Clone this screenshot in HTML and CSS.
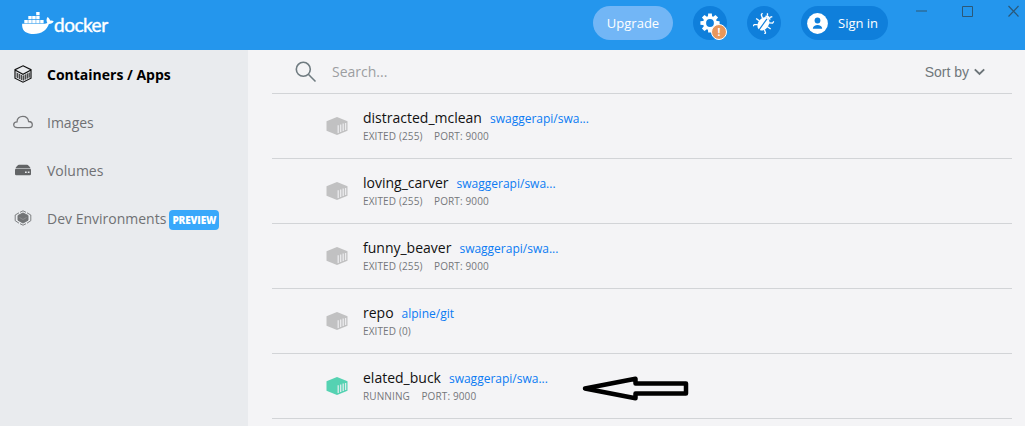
FILE: index.html
```html
<!DOCTYPE html>
<html lang="en">
<head>
<meta charset="utf-8">
<title>Docker Desktop</title>
<link rel="stylesheet" href="styles.css">
</head>
<body>
<svg class="defs" width="0" height="0" aria-hidden="true">
  <symbol id="box" viewBox="0 0 22 18">
    <path d="M11 0 21.500 4.200V13.800L11 18 .5 13.800V4.200Z" fill="currentColor"/>
    <path d="M12.200 8.200V16M14.700 7.400V15M17.200 6.600V14M19.600 6V13" stroke="#f4f4f6" stroke-width="1.300" opacity=".85"/>
  </symbol>
</svg>
<header class="topbar">
  <div class="logo">
    <svg width="32" height="23" viewBox="0 0 32 23" fill="#fff">
      <path d="M14.200 0h3.400v3.300h-3.400zM6.300 4h3.400v3.300H6.300zM10.200 4h3.500v3.300h-3.500zM14.200 4h3.400v3.300h-3.400zM2.300 8h3.500v3.200H2.300zM6.300 8h3.400v3.200H6.300zM10.200 8h3.500v3.200h-3.500zM14.200 8h3.400v3.200h-3.400zM18.200 8h3.400v3.200h-3.400z"/>
      <path d="M.2 11.800H22C23.300 11.800 24.600 11.500 25.300 10.800 24.200 9 24.300 6.700 25.500 5 27.100 6 27.800 7.200 28 8.600 29.500 8.300 30.700 8.600 31.700 9.300 30.900 11 29.400 12 26.900 12 24.500 18.300 19.800 22 11.700 22 4.500 22-.6 18.800.2 11.800Z"/>
    </svg>
    <span class="wordmark">docker</span>
  </div>
  <div class="actions">
    <button class="upgrade">Upgrade</button>
    <button class="round gear">
      <svg width="20" height="20" viewBox="-10 -10 20 20">
        <g fill="#fff"><path id="tooth" d="M-1.800-9.600H1.800L2.300-5H-2.300Z"/><use href="#tooth" transform="rotate(45)"/><use href="#tooth" transform="rotate(90)"/><use href="#tooth" transform="rotate(135)"/><use href="#tooth" transform="rotate(180)"/><use href="#tooth" transform="rotate(225)"/><use href="#tooth" transform="rotate(270)"/><use href="#tooth" transform="rotate(315)"/></g>
        <circle r="5.400" fill="none" stroke="#fff" stroke-width="3"/>
      </svg>
      <span class="alert">!</span>
    </button>
    <button class="round">
      <svg width="22" height="22" viewBox="-11 -11 22 22">
        <g transform="rotate(36)">
          <ellipse cy="1" rx="5.300" ry="7.300" fill="#fff"/>
          <path d="M-3.500-6A3.700 3.300 0 0 1 3.500-6Z" fill="#fff"/>
          <path d="M0-5V9" stroke="#0f7fdb" stroke-width="1.200"/>
          <path d="M-4-3-7-5V-7M-5 1H-9M-4 5-7 7V9M4-3 7-5V-7M5 1H9M4 5 7 7V9M-1.500-8-3-10M1.500-8 3-10" fill="none" stroke="#fff" stroke-width="1.300"/>
        </g>
      </svg>
    </button>
    <button class="signin">
      <svg width="21" height="21" viewBox="0 0 21 21"><circle cx="10.500" cy="10.500" r="10.400" fill="#fff"/><circle cx="10.500" cy="7.500" r="2.900" fill="#0f7fdb"/><path d="M5.800 15.700C6 10.800 15 10.800 15.200 15.700Z" fill="#0f7fdb"/></svg>
      <span>Sign in</span>
    </button>
  </div>
  <svg class="window-controls" width="106" height="14" viewBox="0 0 106 14" fill="none">
    <path d="M0 6H11" stroke="#2977b0" stroke-width="2"/>
    <path d="M46.500 1.500H56.500V11.500H46.500Z" stroke="#2b5878"/>
    <path d="M92.500 1 102.500 11.500M102.500 1 92.500 11.500" stroke="#2b5878" stroke-width="1.200"/>
  </svg>
</header>
<div class="body">
  <nav class="sidebar">
    <a class="item active">
      <svg width="20" height="18" viewBox="0 0 20 18" fill="none" stroke="#111" stroke-width="1.200"><path d="M10 .8 18 4.600V13.200L10 17.200 2 13.200V4.600ZM2 5 10 9.200 18 5"/><path d="M3 7.300 10 10.800 17 7.300V12.300L10 15.500 3 12.300Z" fill="#a0a1a4" stroke="none"/><path d="M4.500 8V13M6.500 9V14M8.500 10V15M10.500 10.500V15.500M12.500 9.500V14.500M14.500 8.500V13.500M16.300 7.800V12.500" stroke="#333" stroke-width=".8"/></svg>
      <span>Containers / Apps</span>
    </a>
    <a class="item">
      <svg width="20" height="14" viewBox="0 0 20 14" fill="none" stroke="#767779" stroke-width="1.300"><path d="M4.500 12.600C1.700 12.600.7 11.100.7 9.700.7 8.100 2 7 4 6.900 4 3.400 6.600 1.400 9.800 1.400 12.900 1.400 15.200 3.400 15.600 6.500 18.100 6.600 19.300 8 19.300 9.700 19.300 11.400 18.100 12.600 16 12.600Z"/></svg>
      <span>Images</span>
    </a>
    <a class="item">
      <svg width="20" height="12" viewBox="0 0 20 12"><path d="M6 .8H14Q15.500 .8 17.600 4.300H2.400Q4.500 .8 6 .8Z" fill="#626466"/><rect x="2" y="4.800" width="16" height="6.500" rx="1.200" fill="#626466"/><path d="M12 8.300H13.700M14.800 8.300H16.500" stroke="#e9ebee" stroke-width="1.500"/></svg>
      <span>Volumes</span>
    </a>
    <a class="item">
      <svg width="20" height="16" viewBox="0 0 20 16" fill="none" stroke="#727476"><path d="M10 3 15 5.500V10.200L10 13 5 10.200V5.500Z" fill="#727476"/><path d="M7 2.300 10 .8 13 2.300M7 13.700 10 15.200 13 13.700M6 2.800 2.200 5V10.700L6 13.200M14 2.800 17.800 5V10.700L14 13.200" stroke-width=".9"/><path d="M6.500 7.500 10 9.500 13.500 7.500" stroke="#96989b" stroke-width=".7"/></svg>
      <span>Dev Environments</span><b class="preview">PREVIEW</b>
    </a>
  </nav>
  <main class="content">
    <div class="search">
      <svg width="22" height="22" viewBox="0 0 22 22" fill="none" stroke="#6f7b80" stroke-width="1.600"><circle cx="8.300" cy="8.300" r="7"/><path d="M13.300 13.300 20.500 20.500"/></svg>
      <span class="placeholder">Search...</span>
      <span class="sort">Sort by</span>
      <svg width="11" height="8" viewBox="0 0 11 8" fill="none" stroke="#6c7478" stroke-width="1.900"><path d="M.8 1.300 5.500 6 10.200 1.300"/></svg>
    </div>
    <div class="row">
      <svg class="box" width="22" height="18"><use href="#box"/></svg>
      <div><div class="title"><span class="name">distracted_mclean</span><a>swaggerapi/swa...</a></div><div class="meta"><span>EXITED (255)</span><span>PORT: 9000</span></div></div>
    </div>
    <div class="row">
      <svg class="box" width="22" height="18"><use href="#box"/></svg>
      <div><div class="title"><span class="name">loving_carver</span><a>swaggerapi/swa...</a></div><div class="meta"><span>EXITED (255)</span><span>PORT: 9000</span></div></div>
    </div>
    <div class="row">
      <svg class="box" width="22" height="18"><use href="#box"/></svg>
      <div><div class="title"><span class="name">funny_beaver</span><a>swaggerapi/swa...</a></div><div class="meta"><span>EXITED (255)</span><span>PORT: 9000</span></div></div>
    </div>
    <div class="row">
      <svg class="box" width="22" height="18"><use href="#box"/></svg>
      <div><div class="title"><span class="name">repo</span><a>alpine/git</a></div><div class="meta"><span>EXITED (0)</span></div></div>
    </div>
    <div class="row">
      <svg class="box running" width="22" height="18"><use href="#box"/></svg>
      <div><div class="title"><span class="name">elated_buck</span><a>swaggerapi/swa...</a></div><div class="meta"><span>RUNNING</span><span>PORT: 9000</span></div></div>
      <svg class="arrow" width="108" height="26" viewBox="0 0 108 26" fill="none" stroke="#000" stroke-width="4.500" stroke-linejoin="round"><path d="M4 12.500 54.500 2.800V7.500H105V17.500H54.500V22.300Z"/></svg>
    </div>
  </main>
</div>
</body>
</html>
```
FILE: styles.css
```css
* { box-sizing: border-box; }
body {
  margin: 0;
  height: 426px;
  overflow: hidden;
  font-family: "Open Sans", sans-serif;
  font-size: 14px;
  background: #f4f4f6;
}
svg { display: block; flex: none; }
.defs { position: absolute; }
button { border: 0; padding: 0; font: inherit; color: #fff; }
.topbar {
  position: relative;
  display: flex;
  height: 50px;
  background: #2496ed;
}
.logo { display: flex; align-items: flex-start; width: 593px; padding: 12px 0 0 22px; color: #fff; }
.wordmark {
  margin-top: 1px;
  font: 400 19px/24px Lato, sans-serif;
  letter-spacing: -.5px;
  -webkit-text-stroke: .4px #fff;
}
.actions { display: flex; padding-top: 6px; height: 40px; }
.actions button { height: 34px; border-radius: 17px; background: #0f7fdb; font-size: 13px; }
.actions .upgrade { width: 80px; margin-right: 20px; background: #72b6f6; }
.actions .round {
  position: relative;
  display: flex;
  align-items: center;
  justify-content: center;
  width: 34px;
  margin-right: 20px;
}
.alert {
  position: absolute;
  left: 18px;
  top: 18px;
  width: 16px;
  height: 16px;
  border: 1px solid #fff;
  border-radius: 50%;
  background: #e9975b;
  font: bold 10px/14px "Open Sans", sans-serif;
  text-align: center;
}
.actions .signin { display: flex; align-items: center; gap: 10px; width: 87px; padding-left: 6px; }
.window-controls { position: absolute; left: 916px; top: 5px; }
.body { display: flex; height: 376px; }
.sidebar { width: 248px; background: #e9ebee; }
.item {
  display: flex;
  align-items: center;
  height: 48px;
  padding-left: 13px;
  color: #707174;
}
.item > svg { margin-right: 14px; }
.item.active { color: #000; font-weight: 700; }
.preview {
  width: 50px;
  height: 20px;
  margin: 4px 0 0 3px;
  border-radius: 4px;
  background: #38a8fb;
  color: #fff;
  font-size: 10px;
  font-weight: 800;
  letter-spacing: -.15px;
  line-height: 21px;
  text-align: center;
}
.content { width: 764px; padding-left: 24px; }
.search {
  display: flex;
  align-items: center;
  height: 44px;
  padding: 0 27px 0 23px;
  border-bottom: 1px solid #d2d4d7;
}
.placeholder { margin-left: 15px; color: #9c9ea1; }
.sort { margin: 0 5px 0 auto; color: #70777b; font-family: "Liberation Sans", sans-serif; }
.row {
  display: flex;
  height: 65px;
  padding-left: 53px;
  border-bottom: 1px solid #d2d4d7;
}
.box { margin: 23px 15px 0 1px; color: #c1c1c2; }
.box.running { color: #55d2b2; }
.title { display: flex; align-items: baseline; gap: 8px; height: 19px; margin-top: 14px; line-height: 19px; }
.name { color: #111; }
.title a { color: #0b7bf3; font-size: 12px; }
.meta { display: flex; gap: 11.5px; margin-top: 2px; color: #74777b; font-size: 10px; letter-spacing: .12px; line-height: 14px; }
.arrow { margin: 22px 0 0 33px; }
```
